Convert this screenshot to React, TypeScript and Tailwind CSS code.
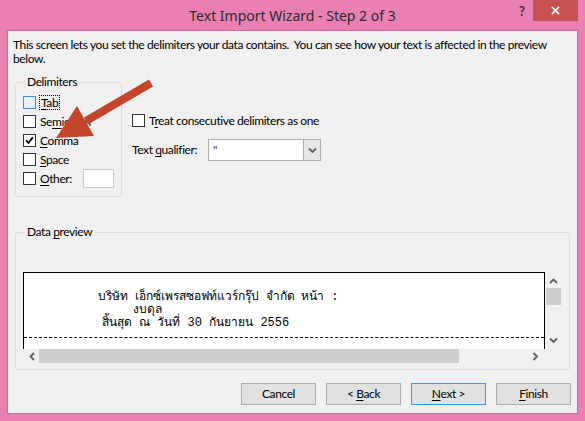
import type { ReactNode } from "react";

function Key({ children }: { children: ReactNode }) {
  return <span className="underline underline-offset-[2px]">{children}</span>;
}

function Checkbox({ checked = false, focused = false }: { checked?: boolean; focused?: boolean }) {
  return (
    <span
      className={`flex size-[13px] shrink-0 items-center justify-center border ${
        focused ? "border-[#3d8ee0] bg-[#e5f1fb]" : "border-[#333333] bg-white"
      }`}
    >
      {checked && (
        <svg viewBox="0 0 11 11" className="size-[11px]">
          <path d="M2.2 5.4 L4.4 7.8 L8.8 2.4" fill="none" stroke="#000" strokeWidth="1.9" />
        </svg>
      )}
    </span>
  );
}

function Chevron({ dir }: { dir: "up" | "down" | "left" | "right" }) {
  const d = {
    up: "M1 5 L4.5 1.5 L8 5",
    down: "M1 1.5 L4.5 5 L8 1.5",
    left: "M5 1 L1.5 4.5 L5 8",
    right: "M1.5 1 L5 4.5 L1.5 8",
  }[dir];
  const vertical = dir === "up" || dir === "down";
  return (
    <svg viewBox={vertical ? "0 0 9 7" : "0 0 7 9"} className={vertical ? "h-[7px] w-[9px]" : "h-[9px] w-[7px]"}>
      <path d={d} fill="none" stroke="#606060" strokeWidth="1.8" />
    </svg>
  );
}

const rows = [
  { pre: "", key: "T", post: "ab", focused: true, checked: false },
  { pre: "Se", key: "m", post: "icolon", focused: false, checked: false },
  { pre: "", key: "C", post: "omma", focused: false, checked: true },
  { pre: "", key: "S", post: "pace", focused: false, checked: false },
];

function WizardButton({ children, primary = false }: { children: ReactNode; primary?: boolean }) {
  return (
    <button
      className={`flex h-[22px] w-[75px] items-center justify-center whitespace-pre border bg-[#e1e1e1] text-[12px] text-black ${
        primary ? "border-[#3399ff]" : "border-[#adadad]"
      }`}
    >
      {children}
    </button>
  );
}

export default function App() {
  return (
    <div className="relative flex h-[421px] w-[585px] flex-col overflow-hidden bg-[#ea80b2] font-['Lato',sans-serif] text-[12px] leading-[14px] text-black">
      {/* title bar */}
      <div className="grid h-[30px] shrink-0 grid-cols-[1fr_auto_1fr]">
        <div />
        <div className="self-center pt-[1px] font-['Noto_Sans',sans-serif] text-[14px] leading-[20px] text-[#2b2b2b]">
          Text Import Wizard - Step 2 of 3
        </div>
        <div className="flex items-start justify-end pr-[7px]">
          <span className="mr-[8px] mt-[4px] text-[13px] font-bold leading-[14px] text-[#333]">?</span>
          <span className="flex h-[21px] w-[45px] items-center justify-center bg-[#c75050]">
            <svg viewBox="0 0 10 10" className="size-[9px]">
              <path d="M1 1 L9 9 M9 1 L1 9" stroke="#fff" strokeWidth="1.8" />
            </svg>
          </span>
        </div>
      </div>

      {/* client area */}
      <div className="mx-[7px] mb-[7px] flex flex-1 flex-col whitespace-nowrap border border-[#c96c9b] bg-[#f0f0f0] tracking-[-0.4px]">
        <p className="pl-[5px] pt-[7px] leading-[14px]">
          This screen lets you set the delimiters your data contains.&nbsp; You can see how your text is affected in the preview
          <br />
          below.
        </p>

        <div className="mt-[9px] flex items-start">
          <fieldset className="ml-[7px] w-[107px] rounded-[3px] border border-[#dcdcdc] pb-[8px] pl-[7px] pt-[4px]">
            <legend className="ml-[2px] px-[2px] leading-[14px]">Delimiters</legend>
            {rows.map((r) => (
              <div key={r.post} className="flex h-[19px] items-center gap-[3px]">
                <Checkbox checked={r.checked} focused={r.focused} />
                <span className={r.focused ? "border border-dotted border-black px-[1px] leading-[13px]" : "pl-[1px]"}>
                  {r.pre}
                  <Key>{r.key}</Key>
                  {r.post}
                </span>
              </div>
            ))}
            <div className="flex h-[19px] items-center gap-[3px]">
              <Checkbox />
              <span className="w-[41px] pl-[1px]">
                <Key>O</Key>ther:
              </span>
              <span className="h-[19px] w-[31px] border border-[#c8c8c8] bg-white" />
            </div>
          </fieldset>

          <div className="ml-[10px] flex flex-col pt-[36px]">
            <div className="flex h-[19px] items-center gap-[4px]">
              <Checkbox />
              <span>
                T<Key>r</Key>eat consecutive delimiters as one
              </span>
            </div>
            <div className="mt-[9px] flex items-center">
              <span className="w-[76px]">
                Text <Key>q</Key>ualifier:
              </span>
              <div className="flex h-[22px] w-[113px] border border-[#abadb3] bg-white">
                <span className="flex-1 pl-[4px] pt-[3px] text-[#4a2a10]">"</span>
                <span className="flex w-[17px] items-center justify-center border-l border-[#abadb3] bg-[#e6e6e6]">
                  <Chevron dir="down" />
                </span>
              </div>
            </div>
          </div>
        </div>

        <fieldset className="ml-[7px] mt-[28px] w-[555px] rounded-[3px] border border-[#dcdcdc] pb-[6px] pl-[7px] pt-[33px]">
          <legend className="ml-[2px] px-[2px] leading-[14px]">
            Data <Key>p</Key>review
          </legend>
          <div className="grid grid-cols-[522px_17px] grid-rows-[77px_14px] tracking-normal">
            <div className="flex flex-col border-x border-t border-black bg-white pt-[18px] font-['Liberation_Mono',monospace] text-[12px] leading-[13px]">
              <div className="flex whitespace-pre pl-[74px]">
                <span className="w-[203px] shrink-0">บริษัท เอ็กซ์เพรสซอฟท์แวร์กรุ๊ป จำกัด</span>
                <span>หน้า :</span>
              </div>
              <div className="whitespace-pre pl-[109px]">งบดุล</div>
              <div className="whitespace-pre pl-[78px]">สิ้นสุด ณ วันที่ 30 กันยายน 2556</div>
              <div className="mt-[7px] border-t border-dashed border-black" />
            </div>
            <div className="flex flex-col items-center pt-[6px]">
              <Chevron dir="up" />
              <div className="mt-[3px] h-[17px] w-[15px] bg-[#cdcdcd]" />
              <div className="mt-auto pb-[5px]">
                <Chevron dir="down" />
              </div>
            </div>
            <div className="flex items-center">
              <span className="ml-[6px]">
                <Chevron dir="left" />
              </span>
              <div className="ml-[3px] h-[14px] w-[420px] bg-[#cdcdcd]" />
              <span className="ml-auto mr-[6px]">
                <Chevron dir="right" />
              </span>
            </div>
            <div />
          </div>
        </fieldset>

        <div className="mt-[13px] flex justify-end gap-[10px] pr-[6px]">
          <WizardButton>Cancel</WizardButton>
          <WizardButton>
            &lt; <Key>B</Key>ack
          </WizardButton>
          <WizardButton primary>
            <Key>N</Key>ext &gt;
          </WizardButton>
          <WizardButton>
            <Key>F</Key>inish
          </WizardButton>
        </div>
      </div>

      {/* annotation arrow */}
      <svg className="pointer-events-none absolute left-0 top-0" width="585" height="421">
        <line x1="151" y1="83" x2="86" y2="121" stroke="#c4442c" strokeWidth="8" />
        <polygon points="56,138 94,136 77,106" fill="#c4442c" />
      </svg>
    </div>
  );
}
